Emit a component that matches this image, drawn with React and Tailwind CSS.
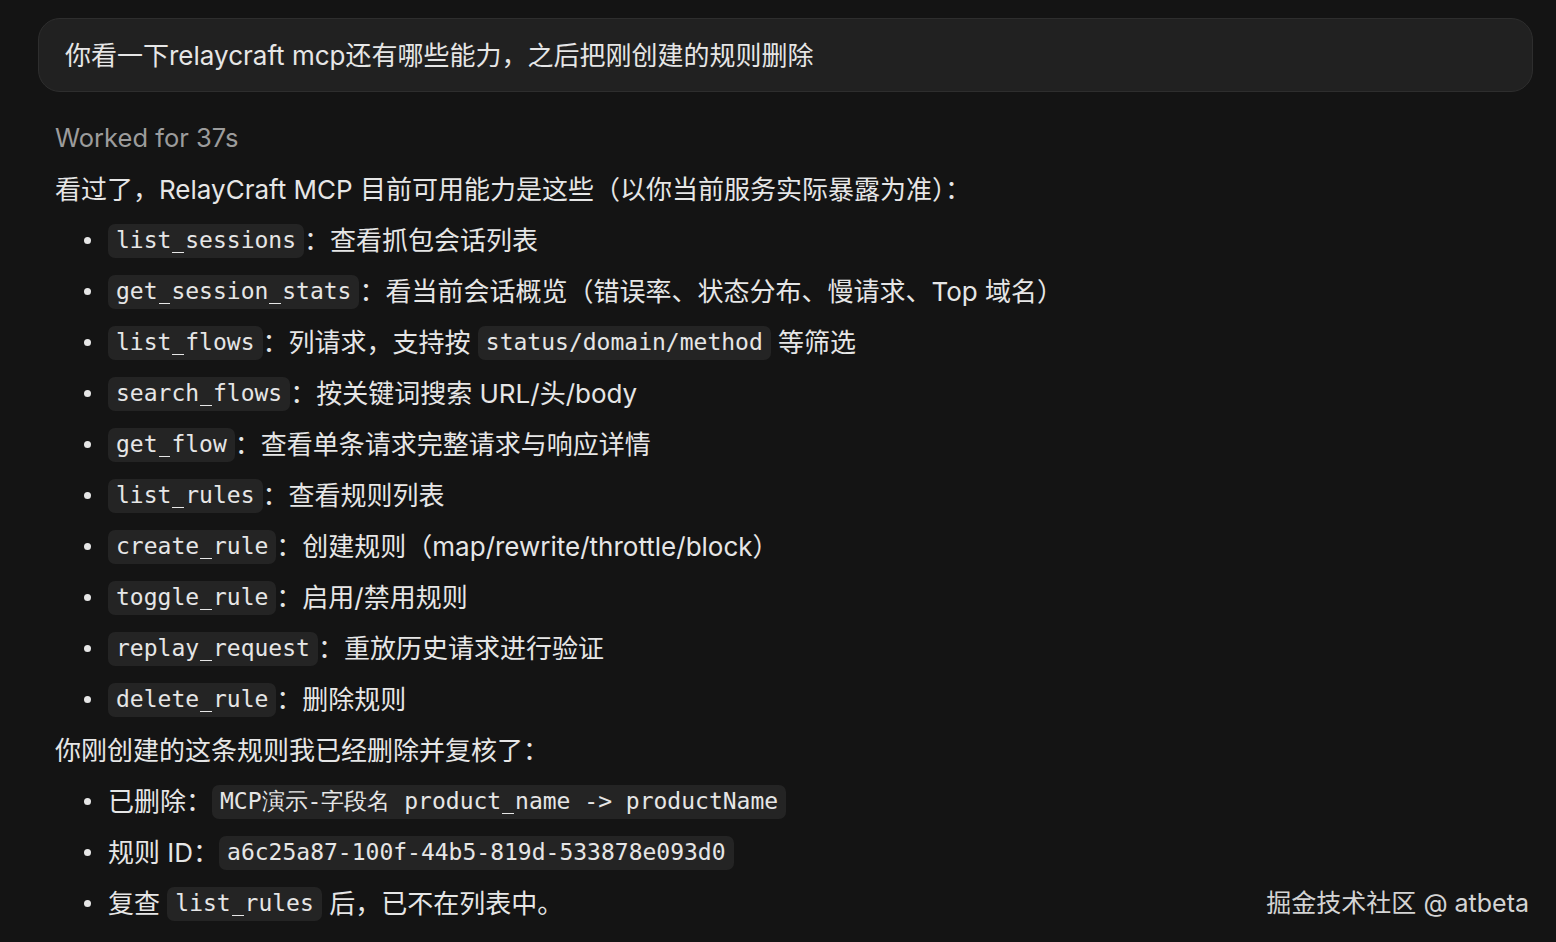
import React from "react";

function Under() {
  return (
    <span className="relative text-transparent after:absolute after:bottom-[0px] after:left-[1px] after:right-[1px] after:h-[1.5px] after:bg-[#e6e6e6] after:content-['']">
      _
    </span>
  );
}

function Code({ children }) {
  const parts = String(children).split("_");
  return (
    <span className="flex h-[34px] shrink-0 items-center rounded-[7px] bg-[#242424] px-[8px]">
      <span className="whitespace-pre font-['DejaVu_Sans_Mono'] text-[23px] text-[#e6e6e6]">
        {parts.map((p, i) => (
          <React.Fragment key={i}>
            {i > 0 && <Under />}
            {p}
          </React.Fragment>
        ))}
      </span>
    </span>
  );
}

function T({ children }) {
  return <span className="whitespace-pre">{children}</span>;
}

function Item({ children }) {
  return (
    <li className="flex h-[51px] items-center">
      <span className="ml-[29px] mr-[17px] h-[7px] w-[7px] shrink-0 rounded-full bg-[#e6e6e6]" />
      {children}
    </li>
  );
}

export default function App() {
  return (
    <div className="relative h-[942px] w-[1556px] bg-[#141414] font-['Inter','Noto_Sans_CJK_SC',sans-serif] text-[26px] text-[#e6e6e6]">
      <div className="px-[38px] pt-[18px] pr-[23px]">
        <div className="flex h-[74px] items-center rounded-[22px] border border-[#2e2e2e] bg-[#212121] px-[26px]">
          你看一下relaycraft mcp还有哪些能力，之后把刚创建的规则删除
        </div>
      </div>
      <div className="mt-[21px] px-[55px]">
        <div className="flex h-[51px] items-center text-[25.5px] text-[#9c9c9c]">Worked for 37s</div>
        <div className="flex h-[51px] items-center">看过了，RelayCraft MCP 目前可用能力是这些（以你当前服务实际暴露为准）：</div>
        <ul>
          <Item><Code>list_sessions</Code><T>：查看抓包会话列表</T></Item>
          <Item><Code>get_session_stats</Code><T>：看当前会话概览（错误率、状态分布、慢请求、Top 域名）</T></Item>
          <Item><Code>list_flows</Code><T>：列请求，支持按 </T><Code>status/domain/method</Code><T> 等筛选</T></Item>
          <Item><Code>search_flows</Code><T>：按关键词搜索 URL/头/body</T></Item>
          <Item><Code>get_flow</Code><T>：查看单条请求完整请求与响应详情</T></Item>
          <Item><Code>list_rules</Code><T>：查看规则列表</T></Item>
          <Item><Code>create_rule</Code><T>：创建规则（map/rewrite/throttle/block）</T></Item>
          <Item><Code>toggle_rule</Code><T>：启用/禁用规则</T></Item>
          <Item><Code>replay_request</Code><T>：重放历史请求进行验证</T></Item>
          <Item><Code>delete_rule</Code><T>：删除规则</T></Item>
        </ul>
        <div className="flex h-[51px] items-center">你刚创建的这条规则我已经删除并复核了：</div>
        <ul>
          <Item><T>已删除：</T><Code>MCP演示-字段名 product_name -&gt; productName</Code></Item>
          <Item><T>规则 ID：</T><Code>a6c25a87-100f-44b5-819d-533878e093d0</Code></Item>
          <Item><T>复查 </T><Code>list_rules</Code><T> 后，已不在列表中。</T></Item>
        </ul>
      </div>
      <div className="absolute bottom-[20px] right-[27px] text-[25px] text-[#d4d4d4]">掘金技术社区 @ atbeta</div>
    </div>
  );
}
